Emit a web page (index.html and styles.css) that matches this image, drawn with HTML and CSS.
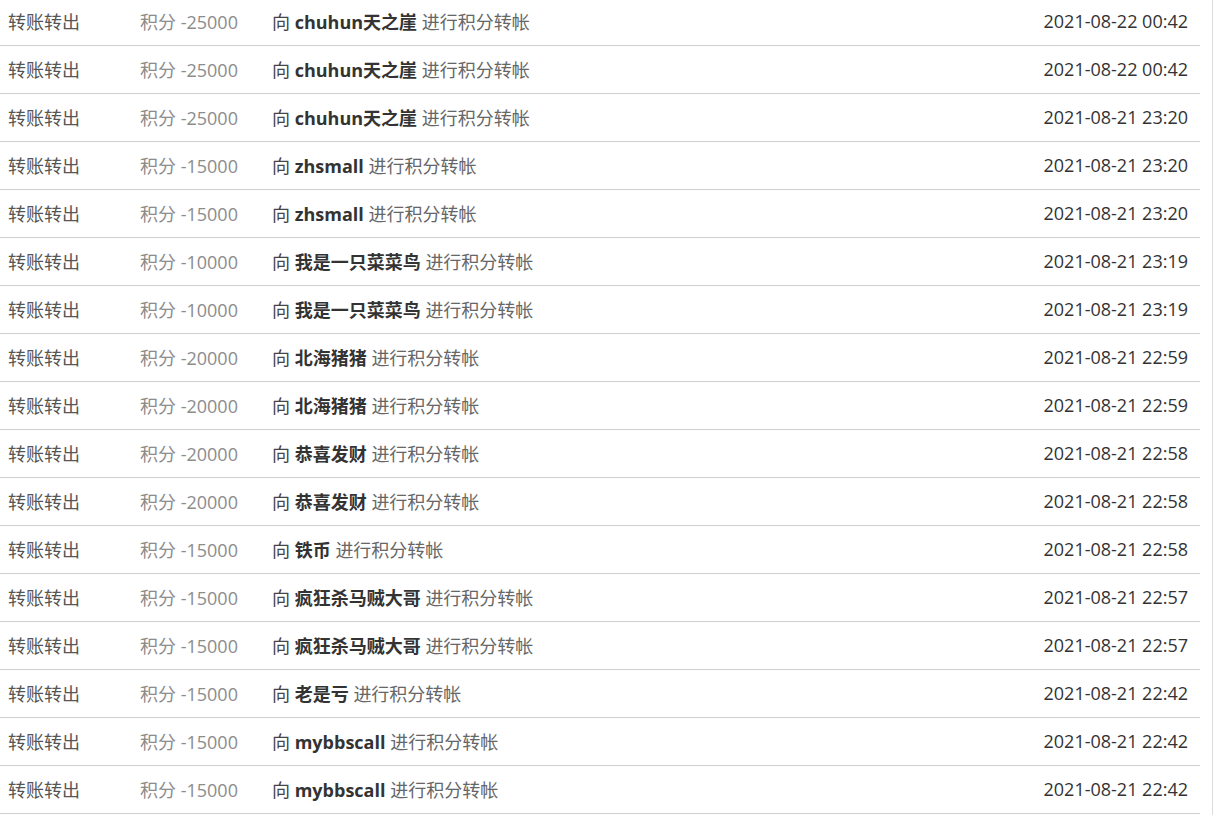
FILE: index.html
```html
<!DOCTYPE html>
<html lang="zh-CN">
<head>
<meta charset="utf-8">
<title>积分记录</title>
<link rel="stylesheet" href="styles.css">
</head>
<body>
<div class="panel">
  <div class="list">
    <div class="row"><span class="type">转账转出</span><span class="amount">积分 -25000</span><span class="desc">向 <b>chuhun天之崖</b> <span class="act">进行积分转帐</span></span><span class="time">2021-08-22 00:42</span></div>
    <div class="row"><span class="type">转账转出</span><span class="amount">积分 -25000</span><span class="desc">向 <b>chuhun天之崖</b> <span class="act">进行积分转帐</span></span><span class="time">2021-08-22 00:42</span></div>
    <div class="row"><span class="type">转账转出</span><span class="amount">积分 -25000</span><span class="desc">向 <b>chuhun天之崖</b> <span class="act">进行积分转帐</span></span><span class="time">2021-08-21 23:20</span></div>
    <div class="row"><span class="type">转账转出</span><span class="amount">积分 -15000</span><span class="desc">向 <b>zhsmall</b> <span class="act">进行积分转帐</span></span><span class="time">2021-08-21 23:20</span></div>
    <div class="row"><span class="type">转账转出</span><span class="amount">积分 -15000</span><span class="desc">向 <b>zhsmall</b> <span class="act">进行积分转帐</span></span><span class="time">2021-08-21 23:20</span></div>
    <div class="row"><span class="type">转账转出</span><span class="amount">积分 -10000</span><span class="desc">向 <b>我是一只菜菜鸟</b> <span class="act">进行积分转帐</span></span><span class="time">2021-08-21 23:19</span></div>
    <div class="row"><span class="type">转账转出</span><span class="amount">积分 -10000</span><span class="desc">向 <b>我是一只菜菜鸟</b> <span class="act">进行积分转帐</span></span><span class="time">2021-08-21 23:19</span></div>
    <div class="row"><span class="type">转账转出</span><span class="amount">积分 -20000</span><span class="desc">向 <b>北海猪猪</b> <span class="act">进行积分转帐</span></span><span class="time">2021-08-21 22:59</span></div>
    <div class="row"><span class="type">转账转出</span><span class="amount">积分 -20000</span><span class="desc">向 <b>北海猪猪</b> <span class="act">进行积分转帐</span></span><span class="time">2021-08-21 22:59</span></div>
    <div class="row"><span class="type">转账转出</span><span class="amount">积分 -20000</span><span class="desc">向 <b>恭喜发财</b> <span class="act">进行积分转帐</span></span><span class="time">2021-08-21 22:58</span></div>
    <div class="row"><span class="type">转账转出</span><span class="amount">积分 -20000</span><span class="desc">向 <b>恭喜发财</b> <span class="act">进行积分转帐</span></span><span class="time">2021-08-21 22:58</span></div>
    <div class="row"><span class="type">转账转出</span><span class="amount">积分 -15000</span><span class="desc">向 <b>铁币</b> <span class="act">进行积分转帐</span></span><span class="time">2021-08-21 22:58</span></div>
    <div class="row"><span class="type">转账转出</span><span class="amount">积分 -15000</span><span class="desc">向 <b>疯狂杀马贼大哥</b> <span class="act">进行积分转帐</span></span><span class="time">2021-08-21 22:57</span></div>
    <div class="row"><span class="type">转账转出</span><span class="amount">积分 -15000</span><span class="desc">向 <b>疯狂杀马贼大哥</b> <span class="act">进行积分转帐</span></span><span class="time">2021-08-21 22:57</span></div>
    <div class="row"><span class="type">转账转出</span><span class="amount">积分 -15000</span><span class="desc">向 <b>老是亏</b> <span class="act">进行积分转帐</span></span><span class="time">2021-08-21 22:42</span></div>
    <div class="row"><span class="type">转账转出</span><span class="amount">积分 -15000</span><span class="desc">向 <b>mybbscall</b> <span class="act">进行积分转帐</span></span><span class="time">2021-08-21 22:42</span></div>
    <div class="row"><span class="type">转账转出</span><span class="amount">积分 -15000</span><span class="desc">向 <b>mybbscall</b> <span class="act">进行积分转帐</span></span><span class="time">2021-08-21 22:42</span></div>
  </div>
</div>
</body>
</html>
```

FILE: styles.css
```css
html, body {
  margin: 0;
  padding: 0;
  background: #fff;
  overflow: hidden;
}

body {
  font-family: "Open Sans", "Noto Sans CJK SC", sans-serif;
  font-size: 18px;
  color: #333;
}

.panel {
  width: 1212px;
  height: 817px;
  border-right: 1px solid #dcdcdc;
}

.list {
  width: 1200px;
  margin-top: -2px;
}

.row {
  display: flex;
  align-items: center;
  height: 45px;
  padding: 0 12px 2px 8px;
  border-bottom: 1px solid #cfcfcf;
  box-sizing: content-box;
  white-space: nowrap;
}

.type {
  width: 132px;
  flex: none;
  color: #555;
}

.amount {
  width: 132px;
  flex: none;
  color: #8c8c8c;
}

.desc {
  flex: 1;
  color: #444;
}

.desc b {
  font-weight: 700;
  color: #333;
}

.act {
  color: #666;
}

.time {
  flex: none;
  color: #333;
  text-align: right;
}
```
